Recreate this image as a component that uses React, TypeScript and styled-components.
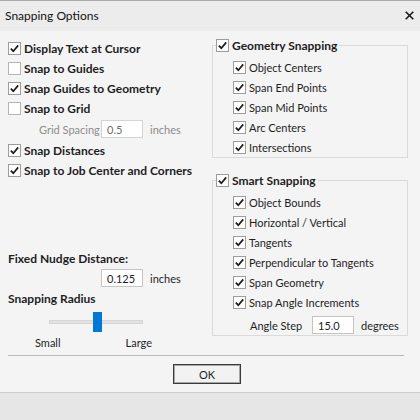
import * as React from 'react'
import styled, { createGlobalStyle } from 'styled-components'

const GlobalStyle = createGlobalStyle`
  html, body {
    margin: 0;
    padding: 0;
    background: #f4f4f4;
  }
  body {
    font-family: Lato, "Open Sans", "Liberation Sans", sans-serif;
    font-size: 11px;
    color: #1e1e1e;
  }
`

type CheckProps = {
  checked?: boolean
}

const Check = ({ checked }: CheckProps) => (
  <Box $checked={checked}>
    {checked && (
      <svg width="11" height="11" viewBox="0 0 11 11">
        <path d="M1.8 5.6 L4.3 8.2 L9.2 2.4" fill="none" stroke="#1c1c1c" strokeWidth="1.7" />
      </svg>
    )}
  </Box>
)

type OptionProps = {
  label: string
  checked?: boolean
  bold?: boolean
}

const Option = ({ label, checked, bold }: OptionProps) => (
  <Row>
    <Check checked={checked} />
    <OptionText $bold={bold}>{label}</OptionText>
  </Row>
)

const geometryItems = ['Object Centers', 'Span End Points', 'Span Mid Points', 'Arc Centers', 'Intersections']

const smartItems = [
  'Object Bounds',
  'Horizontal / Vertical',
  'Tangents',
  'Perpendicular to Tangents',
  'Span Geometry',
  'Snap Angle Increments',
]

const App = () => (
  <Window>
    <GlobalStyle />
    <TitleBar>
      <Title>Snapping Options</Title>
      <CloseButton>
        <svg width="9" height="9" viewBox="0 0 9 9">
          <path d="M0.7 0.7 L8.3 8.3 M8.3 0.7 L0.7 8.3" stroke="#1a1a1a" strokeWidth="1.6" />
        </svg>
      </CloseButton>
    </TitleBar>

    <Body>
      <LeftColumn>
        <Option label="Display Text at Cursor" checked bold />
        <Option label="Snap to Guides" bold />
        <Option label="Snap Guides to Geometry" checked bold />
        <Option label="Snap to Grid" bold />
        <FieldRow $indent={31} $height={22}>
          <FieldLabel $muted>Grid Spacing</FieldLabel>
          <TextBox $muted>0.5</TextBox>
          <Unit $muted>inches</Unit>
        </FieldRow>
        <Option label="Snap Distances" checked bold />
        <Option label="Snap to Job Center and Corners" checked bold />

        <Heading $spaced>Fixed Nudge Distance:</Heading>
        <FieldRow $indent={93} $height={20}>
          <TextBox>0.125</TextBox>
          <Unit>inches</Unit>
        </FieldRow>
        <Heading>Snapping Radius</Heading>
        <Slider>
          <Track>
            <Thumb style={{ left: 43 }} />
          </Track>
        </Slider>
        <SliderLabels>
          <span>Small</span>
          <span>Large</span>
        </SliderLabels>
      </LeftColumn>

      <RightColumn>
        <Group>
          <Legend>
            <Check checked />
            <OptionText $bold>Geometry Snapping</OptionText>
          </Legend>
          {geometryItems.map((item) => (
            <Option key={item} label={item} checked />
          ))}
        </Group>

        <Group $spaced>
          <Legend>
            <Check checked />
            <OptionText $bold>Smart Snapping</OptionText>
          </Legend>
          {smartItems.map((item) => (
            <Option key={item} label={item} checked />
          ))}
          <AngleRow>
            <FieldLabel>Angle Step</FieldLabel>
            <TextBox>15.0</TextBox>
            <Unit>degrees</Unit>
          </AngleRow>
        </Group>
      </RightColumn>
    </Body>

    <Separator />
    <Footer>
      <OkButton>OK</OkButton>
    </Footer>
    <Band />
  </Window>
)

const Window = styled.div`
  width: 420px;
  height: 420px;
  overflow: hidden;
  box-sizing: border-box;
  border-top: 1px solid #a9a9a9;
  background: #f4f4f4;
  display: flex;
  flex-direction: column;
`

const TitleBar = styled.div`
  height: 30px;
  flex: none;
  background: #ececec;
  display: flex;
  align-items: center;
  justify-content: space-between;
  padding: 0 6px 0 5px;
`

const Title = styled.span`
  font-size: 12px;
  color: #111;
  margin-top: -1px;
`

const CloseButton = styled.span`
  display: flex;
  align-items: center;
  margin-top: -2px;
`

const Body = styled.div`
  display: flex;
  padding: 7px 12px 5px 8px;
`

const LeftColumn = styled.div`
  width: 204px;
  display: flex;
  flex-direction: column;
`

const RightColumn = styled.div`
  width: 196px;
  display: flex;
  flex-direction: column;
`

const Row = styled.div`
  height: 20px;
  display: flex;
  align-items: center;
  gap: 3px;
`

const Box = styled.span<{ $checked?: boolean }>`
  width: 13px;
  height: 13px;
  box-sizing: border-box;
  flex: none;
  background: #fff;
  border: 1px solid ${(p) => (p.$checked ? '#9c9c9c' : '#b4b4b4')};
  display: flex;
  align-items: center;
  justify-content: center;
`

const OptionText = styled.span<{ $bold?: boolean }>`
  font-weight: ${(p) => (p.$bold ? 700 : 400)};
  font-size: ${(p) => (p.$bold ? '12px' : '11px')};
  white-space: nowrap;
`

const Heading = styled.div<{ $spaced?: boolean }>`
  height: 20px;
  display: flex;
  align-items: center;
  font-weight: 700;
  font-size: 12px;
  margin-top: ${(p) => (p.$spaced ? '68px' : '0')};
`

const FieldRow = styled.div<{ $indent: number; $height: number }>`
  height: ${(p) => p.$height}px;
  display: flex;
  align-items: center;
  padding-left: ${(p) => p.$indent}px;
`

const FieldLabel = styled.span<{ $muted?: boolean }>`
  width: 62px;
  flex: none;
  color: ${(p) => (p.$muted ? '#8c8c8c' : '#1e1e1e')};
`

const TextBox = styled.span<{ $muted?: boolean }>`
  width: 42px;
  height: 18px;
  box-sizing: border-box;
  flex: none;
  display: flex;
  align-items: center;
  padding-left: 5px;
  background: #fff;
  border: 1px solid ${(p) => (p.$muted ? '#d4d4d4' : '#c4c4c4')};
  color: ${(p) => (p.$muted ? '#6e6e6e' : '#1e1e1e')};
`

const Unit = styled.span<{ $muted?: boolean }>`
  margin-left: 7px;
  color: ${(p) => (p.$muted ? '#8c8c8c' : '#1e1e1e')};
`

const Slider = styled.div`
  height: 24px;
  margin-top: 2px;
  padding-left: 41px;
  display: flex;
  align-items: center;
`

const Track = styled.div`
  position: relative;
  width: 94px;
  height: 4px;
  box-sizing: border-box;
  background: #e2e2e2;
  border: 1px solid #d6d6d6;
`

const Thumb = styled.div`
  position: absolute;
  top: -9px;
  width: 9px;
  height: 20px;
  background: #0078d7;
`

const SliderLabels = styled.div`
  height: 16px;
  width: 117px;
  margin-left: 27px;
  display: flex;
  align-items: center;
  justify-content: space-between;
`

const Group = styled.fieldset<{ $spaced?: boolean }>`
  margin: ${(p) => (p.$spaced ? '15px' : '0')} 0 0 0;
  padding: 5px 0 0 20px;
  border: 1px solid #dadada;
  min-width: 0;
`

const Legend = styled.legend`
  display: flex;
  align-items: center;
  gap: 3px;
  height: 14px;
  padding: 0 2px 0 0;
  margin-left: -17px;
`

const AngleRow = styled.div`
  height: 20px;
  margin-top: 3px;
  display: flex;
  align-items: center;
  & > span:first-child {
    padding-left: 17px;
    width: 62px;
  }
`

const Separator = styled.div`
  height: 1px;
  margin: 0 16px 0 8px;
  background: #b9b9b9;
`

const Footer = styled.div`
  display: flex;
  justify-content: center;
  padding: 8px 6px 8px 0;
`

const OkButton = styled.button`
  width: 68px;
  height: 20px;
  box-sizing: border-box;
  padding: 0;
  border: 1px solid #3a3a3a;
  box-shadow: inset 0 0 0 1px #a6a6a6;
  background: #f2f2f2;
  font-family: Lato, "Open Sans", "Liberation Sans", sans-serif;
  font-size: 11px;
  color: #1e1e1e;
`

const Band = styled.div`
  flex: 1;
  border-top: 1px solid #cdcdcd;
  background: #e6e6e6;
`

export default App
